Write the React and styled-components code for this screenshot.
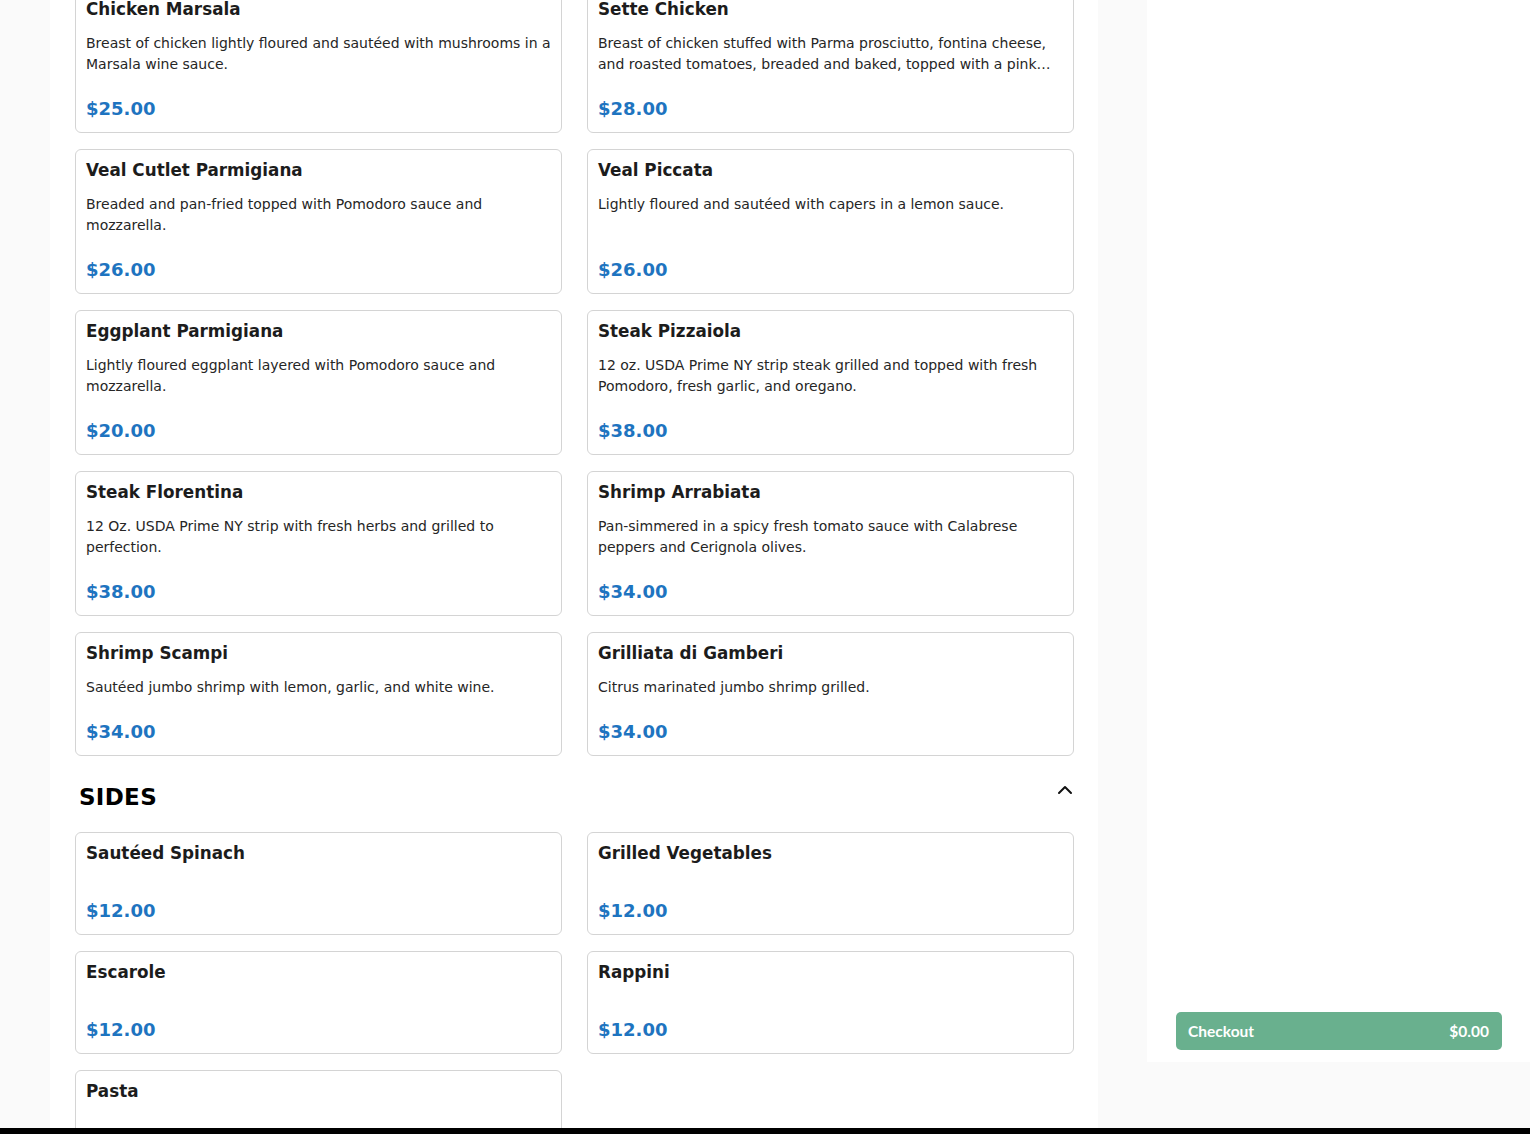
import React from "react";
import styled, { createGlobalStyle } from "styled-components";
import { ChevronUp } from "lucide-react";

const GlobalStyle = createGlobalStyle`
  html, body {
    margin: 0;
    padding: 0;
    background: #fafafa;
  }
  * {
    box-sizing: border-box;
  }
`;

const sections = [
  {
    title: null,
    items: [
      {
        name: "Chicken Marsala",
        desc: "Breast of chicken lightly floured and sautéed with mushrooms in a Marsala wine sauce.",
        price: 25,
      },
      {
        name: "Sette Chicken",
        desc: "Breast of chicken stuffed with Parma prosciutto, fontina cheese, and roasted tomatoes, breaded and baked, topped with a pink vodka sauce.",
        price: 28,
      },
      {
        name: "Veal Cutlet Parmigiana",
        desc: "Breaded and pan-fried topped with Pomodoro sauce and mozzarella.",
        price: 26,
      },
      {
        name: "Veal Piccata",
        desc: "Lightly floured and sautéed with capers in a lemon sauce.",
        price: 26,
      },
      {
        name: "Eggplant Parmigiana",
        desc: "Lightly floured eggplant layered with Pomodoro sauce and mozzarella.",
        price: 20,
      },
      {
        name: "Steak Pizzaiola",
        desc: "12 oz. USDA Prime NY strip steak grilled and topped with fresh Pomodoro, fresh garlic, and oregano.",
        price: 38,
      },
      {
        name: "Steak Florentina",
        desc: "12 Oz. USDA Prime NY strip with fresh herbs and grilled to perfection.",
        price: 38,
      },
      {
        name: "Shrimp Arrabiata",
        desc: "Pan-simmered in a spicy fresh tomato sauce with Calabrese peppers and Cerignola olives.",
        price: 34,
      },
      {
        name: "Shrimp Scampi",
        desc: "Sautéed jumbo shrimp with lemon, garlic, and white wine.",
        price: 34,
      },
      {
        name: "Grilliata di Gamberi",
        desc: "Citrus marinated jumbo shrimp grilled.",
        price: 34,
      },
    ],
  },
  {
    title: "SIDES",
    items: [
      { name: "Sautéed Spinach", desc: "", price: 12 },
      { name: "Grilled Vegetables", desc: "", price: 12 },
      { name: "Escarole", desc: "", price: 12 },
      { name: "Rappini", desc: "", price: 12 },
      { name: "Pasta", desc: "", price: 12 },
    ],
  },
];

const App = () => {
  return (
    <>
      <GlobalStyle />
      <Page>
        <Body>
          <Main>
            <Scroller>
              {sections.map((section, i) => (
                <Section key={i}>
                  {section.title && (
                    <SectionHeader>
                      <SectionTitle>{section.title}</SectionTitle>
                      <Toggle>
                        <ChevronUp size={24} strokeWidth={2} color="#111" />
                      </Toggle>
                    </SectionHeader>
                  )}
                  <Grid>
                    {section.items.map((item) => (
                      <Card key={item.name}>
                        <ItemName>{item.name}</ItemName>
                        <ItemDesc>{item.desc}</ItemDesc>
                        <Price>${item.price.toFixed(2)}</Price>
                      </Card>
                    ))}
                  </Grid>
                </Section>
              ))}
            </Scroller>
          </Main>
          <Sidebar>
            <CheckoutButton>
              <span>Checkout</span>
              <span>$0.00</span>
            </CheckoutButton>
          </Sidebar>
        </Body>
        <BottomBar />
      </Page>
    </>
  );
};

const Page = styled.div`
  width: 1530px;
  height: 1134px;
  overflow: hidden;
  display: flex;
  flex-direction: column;
  background: #fafafa;
  font-family: "DejaVu Sans", "Liberation Sans", sans-serif;
`;

const Body = styled.div`
  flex: 1;
  display: flex;
  flex-direction: row;
  align-items: flex-start;
  overflow: hidden;
`;

const Main = styled.main`
  margin-left: 50px;
  width: 1048px;
  height: 100%;
  background: #ffffff;
  padding: 0 24px 0 25px;
  overflow: hidden;
`;

const Scroller = styled.div`
  margin-top: -12px;
`;

const Section = styled.section`
  & + & {
    margin-top: 26px;
  }
`;

const SectionHeader = styled.div`
  display: flex;
  justify-content: space-between;
  align-items: flex-start;
  padding-left: 4px;
  margin-bottom: 20px;
  height: 30px;
`;

const SectionTitle = styled.h2`
  margin: 0;
  font-size: 23px;
  line-height: 30px;
  font-weight: 700;
  color: #000;
  letter-spacing: 0.3px;
`;

const Toggle = styled.button`
  border: none;
  background: none;
  padding: 0;
  margin: -4px -3px 0 0;
  display: flex;
  cursor: pointer;
`;

const Grid = styled.div`
  display: grid;
  grid-template-columns: 1fr 1fr;
  column-gap: 25px;
  row-gap: 16px;
`;

const Card = styled.div`
  display: flex;
  flex-direction: column;
  border: 1px solid #d4d4d4;
  border-radius: 6px;
  padding: 10px 10px 12px;
  background: #fff;
`;

const ItemName = styled.h3`
  margin: 0 0 13px;
  font-size: 16.8px;
  line-height: 21px;
  font-weight: 700;
  color: #1c1c1c;
`;

const ItemDesc = styled.p`
  margin: 0 0 23px;
  font-size: 14px;
  line-height: 21px;
  color: #262626;
  display: -webkit-box;
  -webkit-line-clamp: 2;
  -webkit-box-orient: vertical;
  overflow: hidden;
`;

const Price = styled.div`
  margin-top: auto;
  font-size: 18px;
  line-height: 22px;
  font-weight: 700;
  color: #1e74c0;
`;

const Sidebar = styled.aside`
  margin-left: 49px;
  width: 383px;
  height: 1062px;
  background: #ffffff;
  display: flex;
  flex-direction: column;
  justify-content: flex-end;
  padding: 0 28px 12px 29px;
`;

const CheckoutButton = styled.button`
  display: flex;
  justify-content: space-between;
  align-items: center;
  height: 38px;
  width: 100%;
  padding: 0 13px 0 12px;
  border: none;
  border-radius: 5px;
  background: #69b08e;
  color: #fff;
  font-family: "Lato", "Open Sans", sans-serif;
  font-weight: 700;
  font-size: 15.5px;
  cursor: pointer;
`;

const BottomBar = styled.div`
  height: 6px;
  background: #000;
  flex-shrink: 0;
`;

export default App;
